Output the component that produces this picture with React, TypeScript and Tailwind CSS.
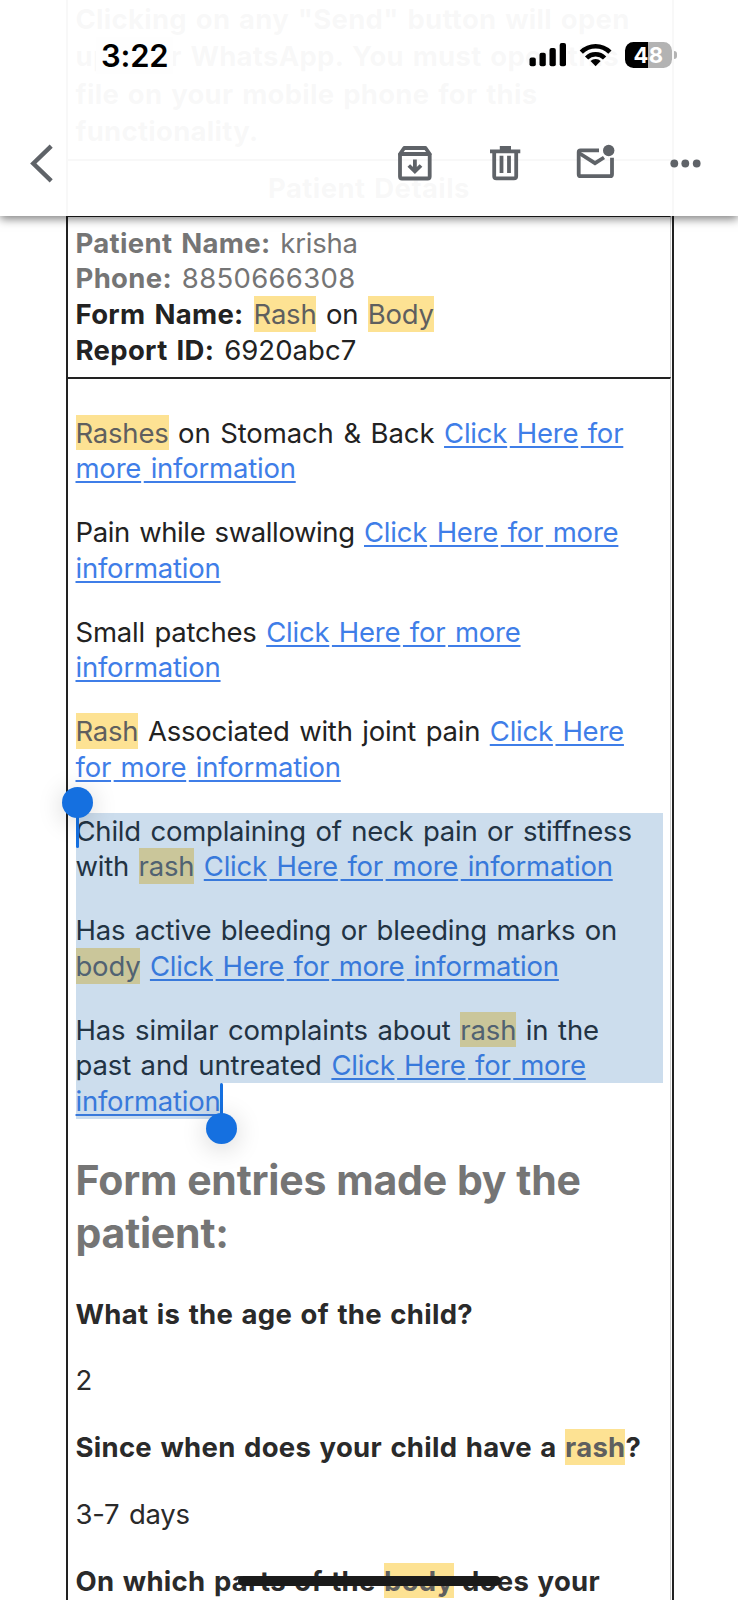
import { Fragment, type ReactNode } from "react";

function Line({ children, className = "" }: { children: ReactNode; className?: string }) {
  return <div className={`h-[35.75px] leading-[37.75px] whitespace-pre ${className}`}>{children}</div>;
}

function Mark({ children }: { children: ReactNode }) {
  return <span className="inline-block h-[35.75px] bg-[#fde293] align-top text-[#5f5f5f]">{children}</span>;
}

function Label({ children }: { children: ReactNode }) {
  return <b className="mr-px font-bold tracking-[0.32px] [word-spacing:2.1px]">{children}</b>;
}

function Question({ children }: { children: ReactNode }) {
  return <b className="font-bold tracking-[0.27px] [word-spacing:1.7px]">{children}</b>;
}

function Link({ children }: { children: string }) {
  return (
    <a className="text-[#3f7ee8] [word-spacing:-0.6px]">
      {children.split(" ").map((word, i) => (
        <Fragment key={i}>
          <span
            className={`underline decoration-[1.5px] underline-offset-[3px] [text-decoration-skip-ink:none] ${i ? "ml-[2.6px]" : ""}`}
          >
            {i ? " " + word : word}
          </span>
        </Fragment>
      ))}
    </a>
  );
}

function Para({ children }: { children: ReactNode }) {
  return <div className="mb-7">{children}</div>;
}

function StatusBar() {
  return (
    <div className="flex h-[110px] items-center justify-between pr-[61.5px] pl-[96px]">
      <div className="bg-[#fefefe] px-[5px] pt-px text-[31px] leading-9 font-semibold tracking-[-0.2px] text-black">
        3:22
      </div>
      <div className="flex items-center">
        <svg width="44" height="28" viewBox="526 41 44 28">
          <rect x="529.5" y="57.5" width="6.3" height="8.8" rx="2" />
          <rect x="539.5" y="52.7" width="6.3" height="13.6" rx="2" />
          <rect x="549.5" y="48" width="6.3" height="18.3" rx="2" />
          <rect x="559.7" y="43" width="6.3" height="23.3" rx="2" />
        </svg>
        <svg width="55" height="28" viewBox="570 41 55 28" fill="none" stroke="#000" strokeWidth="4.6">
          <path d="M581.3 52.2a20.3 20.3 0 0 1 28.6 0" />
          <path d="M586.6 58a12.7 12.7 0 0 1 18 0" />
          <path d="M595.6 66.3l-5.1-5.2a7.4 7.4 0 0 1 10.2 0z" fill="#000" stroke="none" />
        </svg>
        <div className="flex h-[26px] w-[47px] items-center justify-center overflow-hidden rounded-[8.5px] bg-linear-to-r from-black from-49% to-[#b3b3b3] to-49% text-[22px] leading-none font-bold tracking-[0.3px] text-white">
          48
        </div>
        <div className="ml-[1.5px] h-2 w-[3px] rounded-r-full bg-[#b3b3b3]" />
      </div>
    </div>
  );
}

function Toolbar() {
  return (
    <svg className="block" width="738" height="106" viewBox="0 110 738 106" fill="none" stroke="#5f6368" strokeWidth="3.8">
      <path d="M51.2 146.2L33.3 163.5L51.2 180.8" strokeWidth="4.4" />
      <g strokeLinejoin="round">
        <path d="M400 153.6V176.5a2 2 0 0 0 2 2H427.7a2 2 0 0 0 2-2V153.6" />
        <path d="M400 154L404.2 148H425.5L429.7 154Z" />
      </g>
      <path d="M414.9 159.5V171M408.8 165.5L414.9 171.4L421 165.5" />
      <path d="M490 151.3H520.3M499.8 147.8H511" />
      <path d="M494.2 151V176.2a2.2 2.2 0 0 0 2.2 2.2H514a2.2 2.2 0 0 0 2.2-2.2V151" />
      <path d="M501.5 155.8V173M509 155.8V173" />
      <path d="M599 150.4H580.5a1.800 1.800 0 0 0-1.800 1.800V174.200a2 2 0 0 0 2 2H610a2 2 0 0 0 2-2V157.700" />
      <path d="M579 153L595 163.2L604 157.5" />
      <g fill="#5f6368" stroke="none">
        <circle cx="608.7" cy="150.5" r="5.7" />
        <circle cx="674.3" cy="163.5" r="3.9" />
        <circle cx="685.3" cy="163.5" r="3.9" />
        <circle cx="696.7" cy="163.5" r="3.9" />
      </g>
    </svg>
  );
}

export default function App() {
  return (
    <div className="relative h-[1600px] w-[738px] overflow-hidden bg-white font-['Inter',sans-serif] text-[27.5px] leading-[35.75px] tracking-[-0.22px] text-[#222] [word-spacing:2px]">
      <div className="ml-[66px] h-[1600px] w-[608px] border-x-2 border-[#222]">
        <div className="h-[159px] pt-px pl-[7.5px] leading-[37.4px] font-bold tracking-[0.27px] whitespace-nowrap">
          Clicking on any "Send" button will open
          <br />
          up your WhatsApp. You must open this
          <br />
          file on your mobile phone for this
          <br />
          functionality.
        </div>
        <div className="h-[57px] border-t-2 border-[#222] pt-[9px] pr-[2px] text-center leading-[37.4px] font-bold tracking-[0.4px]">
          Patient Details
        </div>

        <div className="mr-[1.5px] h-[161px] border-t-[1.5px] border-r border-[#222] border-r-[#ccc] pt-[7.5px] pl-[7.5px]">
          <Line className="text-[#757575]">
            <Label>Patient Name: </Label>krisha
          </Line>
          <Line className="text-[#757575]">
            <Label>Phone: </Label>
            <span className="tracking-[0.3px]">8850666308</span>
          </Line>
          <Line>
            <Label>Form Name: </Label>
            <Mark>Rash</Mark> on <Mark>Body</Mark>
          </Line>
          <Line>
            <Label>Report ID: </Label>
            <span className="tracking-[0.05px]">6920abc7</span>
          </Line>
        </div>

        <div className="mr-[1.5px] h-[1223px] border-t-2 border-r border-[#222] border-r-[#ccc] pt-[35.5px] pl-[7.5px]">
          <Para>
            <Line>
              <Mark>Rashes</Mark> <span className="tracking-[-0.11px]">on Stomach &amp; Back </span>
              <Link>Click Here for</Link>
            </Line>
            <Line>
              <Link>more information</Link>
            </Line>
          </Para>
          <Para>
            <Line>
              <span className="tracking-[-0.4px]">Pain while swallowing </span>
              <Link>Click Here for more</Link>
            </Line>
            <Line>
              <Link>information</Link>
            </Line>
          </Para>
          <Para>
            <Line>
              Small patches <Link>Click Here for more</Link>
            </Line>
            <Line>
              <Link>information</Link>
            </Line>
          </Para>
          <Para>
            <Line>
              <Mark>Rash</Mark> Associated with joint pain <Link>Click Here</Link>
            </Line>
            <Line>
              <Link>for more information</Link>
            </Line>
          </Para>

          <div className="relative">
            <Para>
              <Line>Child complaining of neck pain or stiffness</Line>
              <Line>
                with <Mark>rash</Mark> <Link>Click Here for more information</Link>
              </Line>
            </Para>
            <Para>
              <Line>Has active bleeding or bleeding marks on</Line>
              <Line>
                <Mark>body</Mark> <Link>Click Here for more information</Link>
              </Line>
            </Para>
            <Line className="tracking-[-0.15px]">
              Has similar complaints about <Mark>rash</Mark> in the
            </Line>
            <Line>
              <span className="tracking-[-0.14px]">past and untreated </span>
              <Link>Click Here for more</Link>
            </Line>
            <Line>
              <Link>information</Link>
            </Line>
            <div className="absolute top-0 left-0 h-[270.5px] w-[587px] bg-[#216bb1]/23" />
            <div className="absolute top-[270.5px] left-0 h-[35.75px] w-[146px] bg-[#216bb1]/23" />
            <div className="absolute top-0 left-0 h-[35px] w-[3px] rounded-full bg-[#1570e0]" />
            <div className="absolute -top-[26px] -left-[14px] size-[31px] rounded-full bg-[#1570e0] shadow-[0_4px_26px_rgba(0,0,0,0.18)]" />
            <div className="absolute top-[270.5px] left-[144.5px] h-[35px] w-[3px] rounded-full bg-[#1570e0]" />
            <div className="absolute top-[300px] left-[130.5px] size-[31px] rounded-full bg-[#1570e0] shadow-[0_4px_26px_rgba(0,0,0,0.18)]" />
          </div>

          <div className="mt-[35.5px] text-[41px] leading-[52.5px] font-bold tracking-[-0.2px] [word-spacing:0.5px] whitespace-nowrap text-[#757575]">
            Form entries made by the
            <br />
            patient:
          </div>

          <div className="flex flex-col gap-[31px] pt-[36.3px] text-[#2a2a2a]">
            <Line>
              <Question>What is the age of the child?</Question>
            </Line>
            <Line>2</Line>
            <Line>
              <Question>
                Since when does your child have a <Mark>rash</Mark>?
              </Question>
            </Line>
            <Line>3-7 days</Line>
            <Line>
              <Question>
                On which parts of the <Mark>body</Mark> does your
              </Question>
            </Line>
          </div>
        </div>
      </div>

      <div className="absolute inset-x-0 top-0 h-[216px] bg-white/97 shadow-[0_3px_9px_rgba(0,0,0,0.5)]">
        <StatusBar />
        <Toolbar />
      </div>
      <div className="absolute bottom-[14.5px] left-[238px] h-[9.5px] w-[263px] rounded-full bg-[#1a1a1a]" />
    </div>
  );
}
